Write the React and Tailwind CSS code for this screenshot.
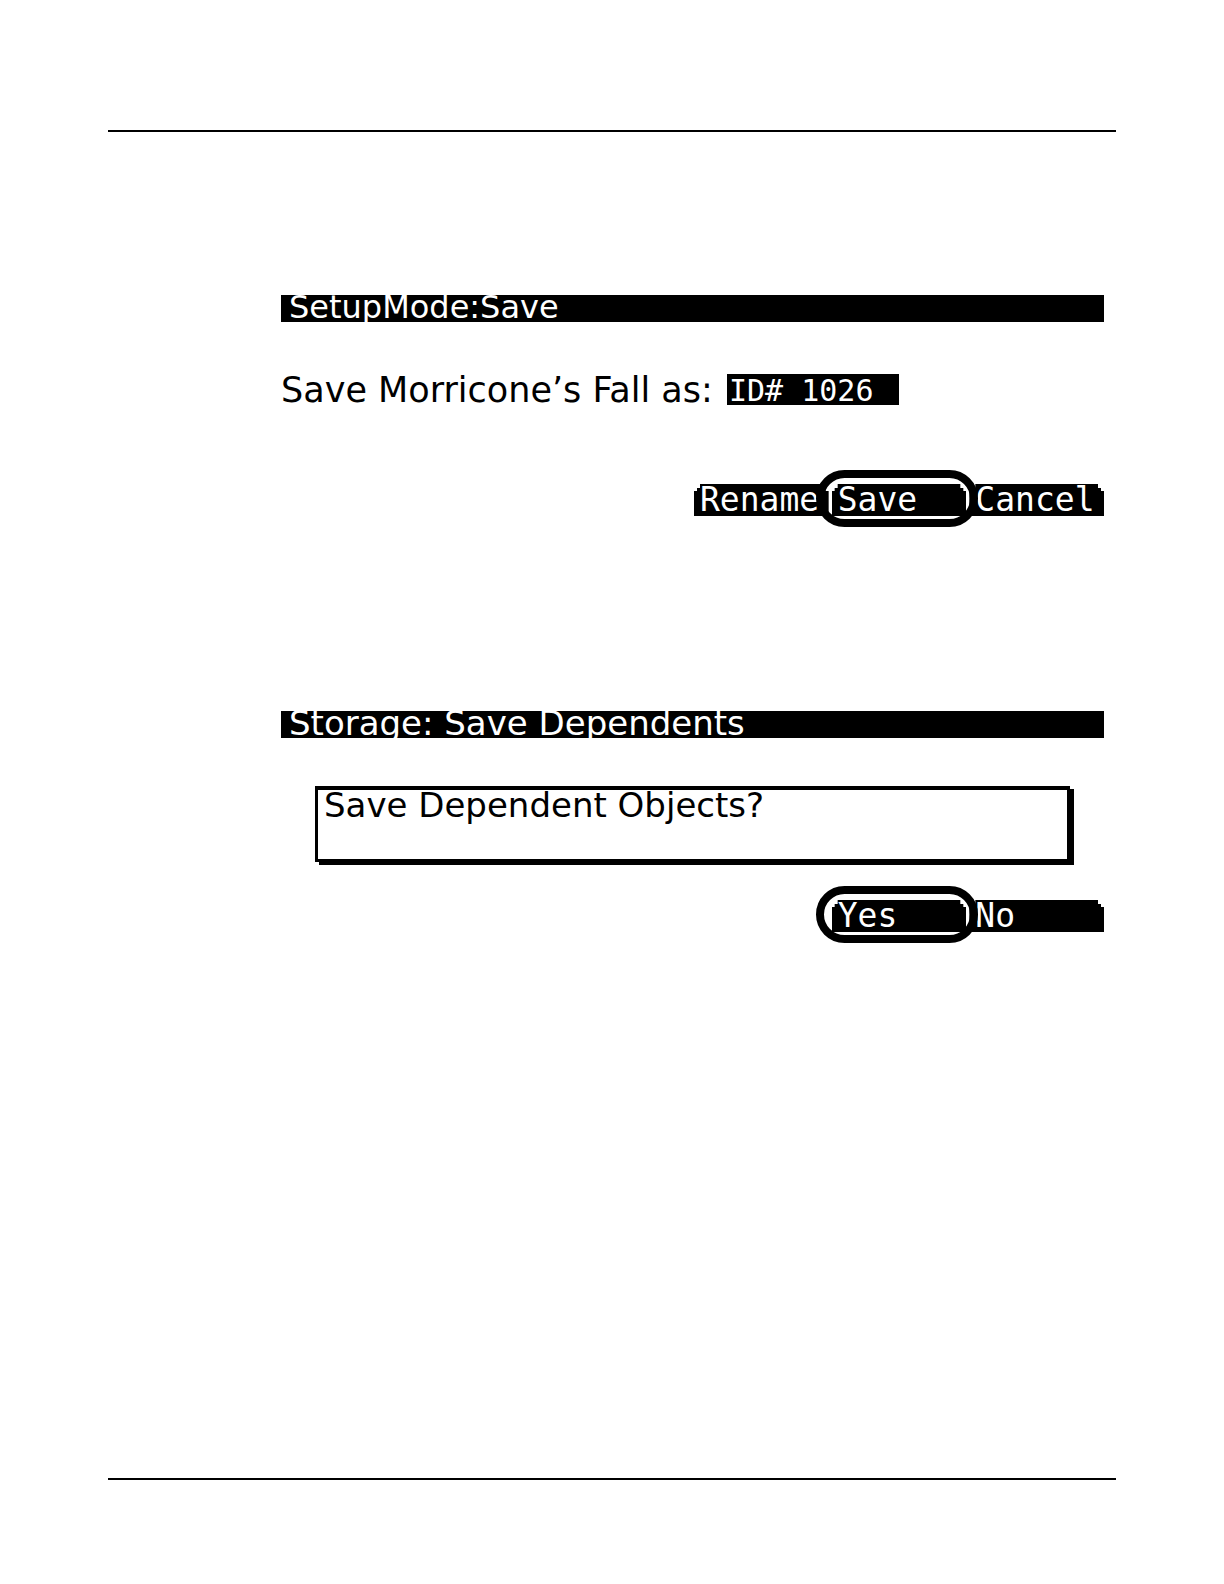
import { useState } from 'react'
import clsx from 'clsx'

// Bar at the top of each LCD page
const TitleBar = ({ children, className }) => (
    <h2 className={clsx('h-[27px] bg-black pl-2 leading-6 whitespace-nowrap text-white', className)}>
        {children}
    </h2>
)

const SoftButton = ({ label, circled, onClick }) => (
    <div className="relative h-full">
        <button
            type="button"
            onClick={onClick}
            className="relative block h-full w-full pl-1.5 text-left font-['DejaVu_Sans_Mono',monospace] text-[33px] leading-8 text-white"
        >
            {/* stepped corners */}
            <span className="absolute inset-0 bg-black [clip-path:polygon(0_7px,3px_7px,3px_4px,6px_4px,6px_0,calc(100%-6px)_0,calc(100%-6px)_4px,calc(100%-3px)_4px,calc(100%-3px)_7px,100%_7px,100%_100%,0_100%)]" />
            <span className="relative">{label}</span>
        </button>
        {circled && (
            <span className="pointer-events-none absolute -top-3.5 -right-3 -bottom-[11px] -left-4 z-10 rounded-full border-8 border-black" />
        )}
    </div>
)

// Six soft button slots; the labels sit in the rightmost ones
const SoftButtons = ({ buttons, circled, onPress, className }) => (
    <div className={clsx('grid grid-cols-6 gap-[3px]', className)}>
        {buttons.map((label, i) => (
            <div key={label} className={clsx(i === 0 && (buttons.length === 3 ? 'col-start-4' : 'col-start-5'))}>
                <SoftButton label={label} circled={label === circled} onClick={() => onPress(label)} />
            </div>
        ))}
    </div>
)

export default function App() {
    const [id, setId] = useState('ID# 1026')
    const [, setPressed] = useState(null)

    return (
        <main className="bg-white px-[108px] pt-[130px] pb-[104px] font-['DejaVu_Sans',sans-serif] text-[34px] text-black">
            <hr className="border-t-2 border-black" />

            <div className="pt-[163px] pr-3 pb-[547px] pl-[173px]">
                <section>
                    <TitleBar className="text-[32px]">SetupMode:Save</TitleBar>
                    <div className="mt-[52px] flex leading-8">
                        <label htmlFor="object-id" className="h-[31px] w-[446px] text-[35px] whitespace-nowrap">
                            Save Morricone’s Fall as:
                        </label>
                        <input
                            id="object-id"
                            value={id}
                            onChange={(e) => setId(e.target.value)}
                            className="h-[31px] w-[172px] bg-black pt-0.5 pl-0.5 font-['DejaVu_Sans_Mono',monospace] text-[30px] text-white outline-none"
                        />
                    </div>
                    <SoftButtons
                        className="mt-[79px] h-8"
                        buttons={['Rename', 'Save', 'Cancel']}
                        circled="Save"
                        onPress={setPressed}
                    />
                </section>

                <section className="mt-[195px]">
                    <TitleBar>Storage: Save Dependents</TitleBar>
                    <div className="mt-12 mr-[34px] ml-[34px] h-[76px] border-3 border-t-4 border-black pl-1.5 leading-[30px] whitespace-nowrap shadow-[4px_3px_0_#000]">
                        <p>Save Dependent Objects?</p>
                    </div>
                    <SoftButtons
                        className="mt-[38px] h-[31px]"
                        buttons={['Yes', 'No']}
                        circled="Yes"
                        onPress={setPressed}
                    />
                </section>
            </div>

            <hr className="border-t-2 border-black" />
        </main>
    )
}
